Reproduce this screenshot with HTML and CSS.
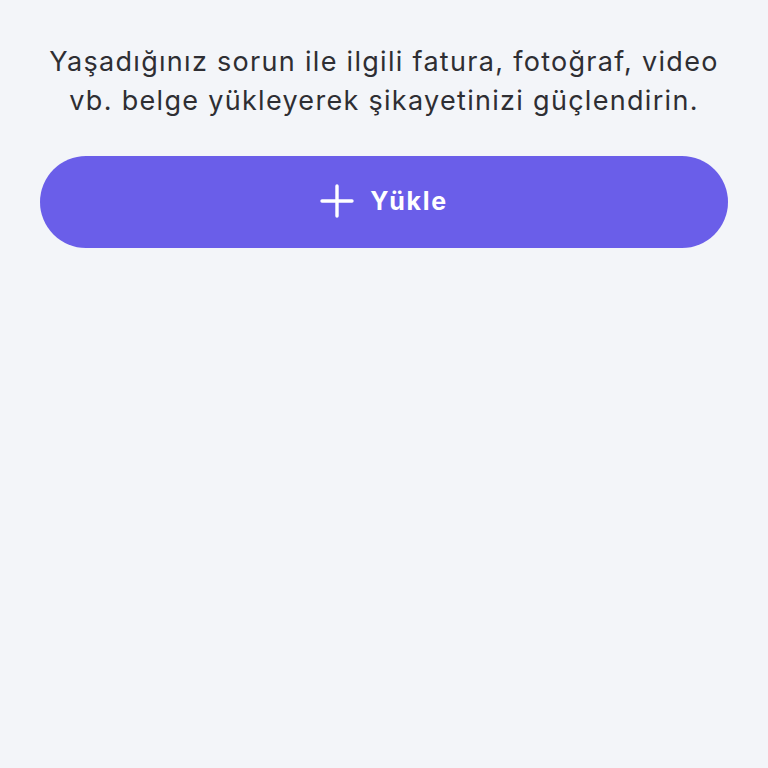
FILE: index.html
```html
<!DOCTYPE html>
<html lang="tr">
<head>
    <meta charset="UTF-8">
    <meta name="viewport" content="width=device-width, initial-scale=1.0">
    <title>Belge Yükle</title>
    <link rel="stylesheet" href="styles.css">
</head>
<body>
    <div class="yukleme">
        <p class="yukleme_aciklama">Yaşadığınız sorun ile ilgili fatura, fotoğraf, video<br>vb. belge yükleyerek şikayetinizi güçlendirin.</p>
        <button class="yukleme_btn">
            <svg class="yukleme_ikon" viewBox="0 0 34 34" width="34" height="34">
                <path d="M17 2V32M2 17H32" stroke="#fff" stroke-width="3.4" stroke-linecap="round" fill="none"/>
            </svg>
            <span>Yükle</span>
        </button>
    </div>
</body>
</html>
```

FILE: styles.css
```css
body{
    margin: 0;
    padding: 0;
    background-color: #f3f5f9;
    font-family: Inter, "Open Sans", Arial, sans-serif;
}

.yukleme{
    padding: 40px 40px;
    display: flex;
    flex-direction: column;
    align-items: stretch;
}

.yukleme_aciklama{
    margin: 0;
    text-align: center;
    font-size: 27px;
    line-height: 39px;
    letter-spacing: 1.3px;
    color: #2e2e33;
    padding: 2px 0 0;
}

.yukleme_btn{
    margin-top: 36px;
    height: 92px;
    padding: 0 0 2px;
    border: none;
    border-radius: 46px;
    background-color: #6a5ee9;
    color: #ffffff;
    font-family: inherit;
    font-size: 25px;
    font-weight: 700;
    letter-spacing: 1.7px;
    display: flex;
    align-items: center;
    justify-content: center;
    gap: 16px;
    cursor: pointer;
}

.yukleme_ikon{
    display: block;
}
```
